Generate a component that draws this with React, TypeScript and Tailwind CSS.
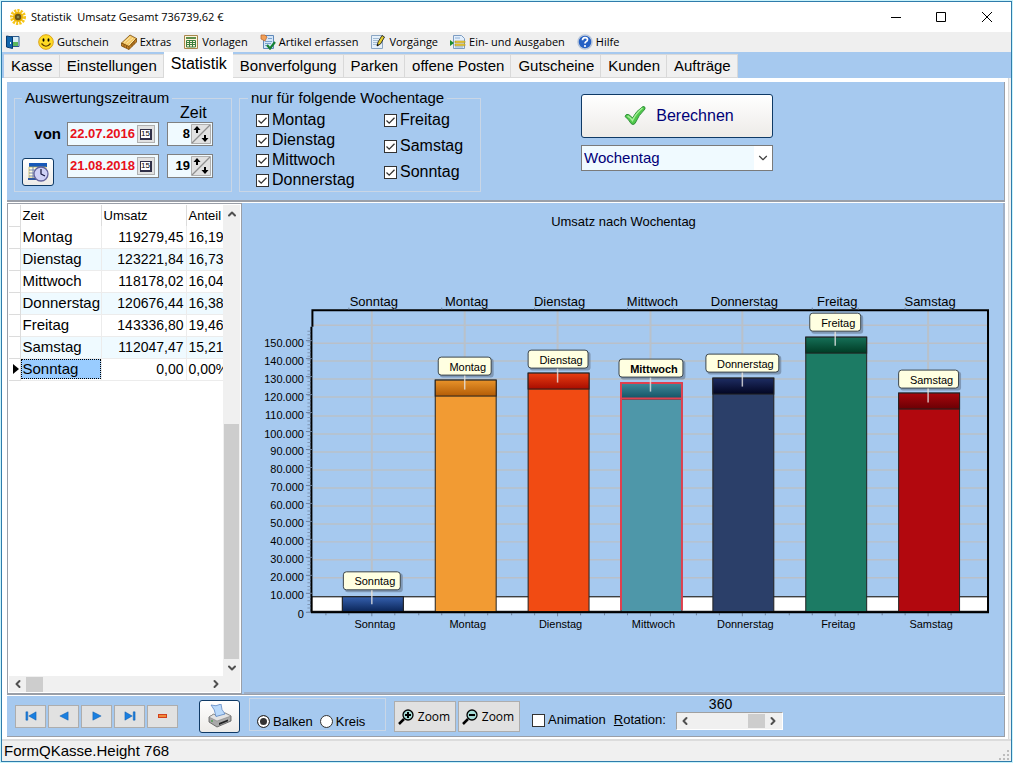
import { ReactNode, useState } from 'react'
import { ChevronDown, ChevronLeft, ChevronRight, ChevronUp } from 'lucide-react'

const menuItems = [
  { label: 'Gutschein', icon: <SmileyIcon /> },
  { label: 'Extras', icon: <ExtrasIcon /> },
  { label: 'Vorlagen', icon: <TemplateIcon /> },
  { label: 'Artikel erfassen', icon: <ArticleIcon /> },
  { label: 'Vorgänge', icon: <NotesIcon /> },
  { label: 'Ein- und Ausgaben', icon: <InOutIcon /> },
  { label: 'Hilfe', icon: <HelpIcon /> },
]

const tabs = [
  'Kasse',
  'Einstellungen',
  'Statistik',
  'Bonverfolgung',
  'Parken',
  'offene Posten',
  'Gutscheine',
  'Kunden',
  'Aufträge',
]

const rows = [
  { day: 'Montag', amount: '119279,45', share: '16,19%' },
  { day: 'Dienstag', amount: '123221,84', share: '16,73%' },
  { day: 'Mittwoch', amount: '118178,02', share: '16,04%' },
  { day: 'Donnerstag', amount: '120676,44', share: '16,38%' },
  { day: 'Freitag', amount: '143336,80', share: '19,46%' },
  { day: 'Samstag', amount: '112047,47', share: '15,21%' },
  { day: 'Sonntag', amount: '0,00', share: '0,00%' },
]

export default function App() {
  const [tab, setTab] = useState('Statistik')
  const [grouping, setGrouping] = useState('Wochentag')
  const [chartType, setChartType] = useState('Balken')

  return (
    <div className="flex min-h-screen flex-col bg-[#c9f3fb] p-px font-['Liberation_Sans',Arial,sans-serif] text-black">
      <div className="flex flex-1 flex-col border border-[#2f7cab] bg-[#f0f0f0]">
        <TitleBar />

        <nav className="flex h-5 items-center bg-[#efefef] pl-1 font-['Open_Sans',sans-serif] text-[11px] leading-5">
          <button type="button" aria-label="Beenden" className="mr-[18px]">
            <DoorIcon />
          </button>
          {menuItems.map((item) => (
            <button key={item.label} type="button" className="mr-3 flex items-center gap-[3px] whitespace-nowrap">
              {item.icon}
              {item.label}
            </button>
          ))}
        </nav>

        <div role="tablist" className="flex h-[26px] items-end bg-[#a6c9ef] pl-0.5 text-[15px]">
          {tabs.map((name) => (
            <button
              key={name}
              type="button"
              role="tab"
              aria-selected={tab === name}
              onClick={() => setTab(name)}
              className={
                tab === name
                  ? 'h-[26px] whitespace-nowrap bg-white pb-0.5 pl-[7px] pr-1.5 text-[16px] leading-5'
                  : 'h-6 whitespace-nowrap border border-l-0 border-[#d9d9d9] bg-[#f0f0f0] pl-[7px] pr-1.5 leading-5'
              }
            >
              {name}
            </button>
          ))}
        </div>

        <main className="mr-0.5 flex flex-1 flex-col border-r border-[#d9d9d9] bg-white pb-0.5 pl-[5px] pr-[3px] pt-1">
          <FilterBar grouping={grouping} setGrouping={setGrouping} />

          <div className="mt-px flex flex-1 border-b border-[#9a9fa8] bg-[#a6c9ef]">
            <DataGrid />
            <div className="ml-0.5 min-w-0 flex-1 border-b-2 border-r-2 border-[#a0b0c6]">
              <SalesChart />
            </div>
          </div>

          <BottomBar chartType={chartType} setChartType={setChartType} />
        </main>

        <footer className="flex h-[22px] items-center justify-between border-t-2 border-[#dcdcdc] bg-[#f0f0f0] pl-0.5 text-[15px] leading-5">
          FormQKasse.Height 768
          <svg className="h-3 w-3 self-end" viewBox="0 0 12 12" fill="#bdbdbd">
            <path d="M8 1h2v2H8zM8 5h2v2H8zM8 9h2v2H8zM4 5h2v2H4zM4 9h2v2H4zM0 9h2v2H0z" />
          </svg>
        </footer>
      </div>
    </div>
  )
}

function TitleBar() {
  return (
    <header className="flex h-[30px] items-center bg-white pl-2 pr-px">
      <svg className="h-4 w-4" viewBox="0 0 16 16">
        <circle cx="8" cy="8" r="6" fill="none" stroke="#f5c518" strokeWidth="4" strokeDasharray="2 1" />
        <circle cx="8" cy="8" r="5" fill="#eab308" />
        <circle cx="8" cy="8" r="3.2" fill="#6b5518" />
        <circle cx="8" cy="8" r="1.3" fill="#8c8a4a" />
      </svg>
      <h1 className="ml-[5px] flex-1 whitespace-pre font-['Open_Sans',sans-serif] text-[11px]">
        {'Statistik  Umsatz Gesamt 736739,62 €'}
      </h1>
      <button type="button" aria-label="Minimieren" className="flex h-full w-[45px] items-center justify-center">
        <svg className="h-3 w-3" viewBox="0 0 12 12" stroke="#000">
          <path d="M1 6.5h10" />
        </svg>
      </button>
      <button type="button" aria-label="Maximieren" className="flex h-full w-[45px] items-center justify-center">
        <svg className="h-3 w-3" viewBox="0 0 12 12" stroke="#000" fill="none">
          <path d="M1.5 1.5h9v9h-9z" />
        </svg>
      </button>
      <button type="button" aria-label="Schließen" className="flex h-full w-[47px] items-center justify-center">
        <svg className="h-3 w-3" viewBox="0 0 12 12" stroke="#000" fill="none">
          <path d="M1 1l10 10M11 1L1 11" />
        </svg>
      </button>
    </header>
  )
}

function FilterBar({ grouping, setGrouping }: { grouping: string; setGrouping: (v: string) => void }) {
  return (
    <section className="flex border-b-2 border-r border-b-[#9a9fa8] border-r-[#9a9fa8] bg-[#a6c9ef] pb-2 pl-[7px] pt-2">
      <fieldset className="w-[218px] border border-[#c9d6e6] pb-[5px] pl-[7px]">
        <legend className="px-[3px] text-[15px] leading-4">Auswertungszeitraum</legend>
        <div className="pl-[158px] text-[16px] leading-[14px]">Zeit</div>
        <div className="mt-0.5 flex items-center">
          <label htmlFor="from" className="w-[45px] pr-1.5 text-right text-[15px] font-bold">
            von
          </label>
          <DateField id="from" label="Datum von" value="22.07.2016" />
          <SpinField label="Stunde von" value="8" />
        </div>
        <div className="mt-2 flex items-start">
          <div className="w-[45px] pt-1">
            <button
              type="button"
              aria-label="Zeitraum wählen"
              className="flex h-7 w-8 items-center justify-center rounded-[3px] border border-[#0f3a66] bg-linear-to-b from-white to-[#edebe8]"
            >
              <CalendarClockIcon />
            </button>
          </div>
          <DateField id="to" label="Datum bis" value="21.08.2018" />
          <SpinField label="Stunde bis" value="19" />
        </div>
      </fieldset>

      <fieldset className="ml-[7px] flex w-[242px] border border-[#c9d6e6] pl-4 text-[16px]">
        <legend className="-ml-2 px-[3px] text-[15px] leading-4">nur für folgende Wochentage</legend>
        <div className="flex">
          <div className="w-32 pt-1">
            {['Montag', 'Dienstag', 'Mittwoch', 'Donnerstag'].map((day) => (
              <Check key={day} label={day} className="h-5" defaultChecked />
            ))}
          </div>
          <div className="pt-px">
            {['Freitag', 'Samstag', 'Sonntag'].map((day) => (
              <Check key={day} label={day} className="h-[26px]" defaultChecked />
            ))}
          </div>
        </div>
      </fieldset>

      <div className="ml-[100px] flex w-48 flex-col gap-[7px] pt-1 text-[#000078]">
        <button
          type="button"
          className="flex h-11 items-center justify-center gap-2.5 rounded-[3px] border border-[#0f3a66] bg-linear-to-b from-white to-[#edebe8] pl-1 text-[16px]"
        >
          <svg className="h-[22px] w-[22px]" viewBox="0 0 22 22">
            <path
              d="M1 11.500Q2 8.500 4.500 9.500Q7 11 8.500 13Q12 6 19 1.500Q21.500 1.200 21 4Q14.500 10 11 18.500Q9 20.500 7 18.500Q4.500 14 1 11.500z"
              fill="#4fc94a"
              stroke="#2f8f3a"
            />
            <path d="M3.500 11Q6 12 8.500 15.500Q12 8 18.500 3" fill="none" stroke="#a5ee98" strokeWidth="1.500" />
          </svg>
          Berechnen
        </button>
        <div className="relative">
          <select
            aria-label="Gruppierung"
            value={grouping}
            onChange={(e) => setGrouping(e.target.value)}
            className="block h-[26px] w-full appearance-none rounded-none border border-[#7a7a7a] bg-[#f0faff] pl-0.5 text-[15px] leading-5 outline-none"
          >
            <option>Wochentag</option>
            <option>Monat</option>
            <option>Stunde</option>
          </select>
          <span className="pointer-events-none absolute inset-y-px right-px flex w-[18px] items-center justify-center bg-white">
            <ChevronDown className="h-3.5 w-3.5 text-[#404040]" />
          </span>
        </div>
      </div>
    </section>
  )
}

function DateField({ id, label, value }: { id: string; label: string; value: string }) {
  return (
    <div className="flex h-6 w-[92px] items-center border border-[#808080] bg-[#f0faff] pr-[3px]">
      <input
        id={id}
        aria-label={label}
        defaultValue={value}
        className="w-full min-w-0 bg-transparent pl-0.5 text-[13px] font-bold text-[#e8101a] outline-none"
      />
      <button
        type="button"
        aria-label="Kalender öffnen"
        className="flex h-[18px] w-[18px] shrink-0 items-center justify-center border border-[#b0b0b0] bg-[#e1e1e1]"
      >
        <span className="border border-b-2 border-r-2 border-[#303048] bg-white text-[8px] leading-[8px]">15</span>
      </button>
    </div>
  )
}

function SpinField({ label, value }: { label: string; value: string }) {
  return (
    <div className="ml-2 flex h-6 w-[46px] items-center border border-[#808080] bg-[#f0faff] pr-px">
      <input
        aria-label={label}
        defaultValue={value}
        className="w-full min-w-0 bg-transparent pr-px text-right text-[13px] font-bold outline-none"
      />
      <button type="button" aria-label={`${label} ändern`} className="shrink-0 bg-[#e1e1e1]">
        <svg className="h-5 w-5" viewBox="0 0 20 20">
          <path d="M.5.5h19v19H.5z" fill="#e1e1e1" stroke="#b0b0b0" />
          <path d="M1 19L19 1" stroke="#909090" strokeWidth="1.300" />
          <path d="M6 2l3.500 4H7v3H5V6H2.500zM14 18l-3.500-4H13v-3h2v3h2.500z" fill="#000" />
        </svg>
      </button>
    </div>
  )
}

function Check({ label, className, defaultChecked }: { label: string; className: string; defaultChecked?: boolean }) {
  return (
    <label className={`flex items-center gap-[3px] whitespace-nowrap ${className}`}>
      <span className="relative h-[13px] w-[13px]">
        <input
          type="checkbox"
          defaultChecked={defaultChecked}
          className="peer block h-[13px] w-[13px] appearance-none border border-[#333] bg-white"
        />
        <svg
          className="pointer-events-none absolute inset-0 hidden peer-checked:block"
          viewBox="0 0 13 13"
          fill="none"
          stroke="#333"
          strokeWidth="1.300"
        >
          <path d="M2.500 6.500l2.700 2.700L10.500 3.800" />
        </svg>
      </span>
      {label}
    </label>
  )
}

function DataGrid() {
  return (
    <div className="flex w-[235px] shrink-0 flex-col border border-[#9a9fa8] bg-white p-px">
      <div className="flex flex-1">
        <div className="w-[215px] overflow-hidden">
          <table className="w-[230px] table-fixed border-collapse">
            <thead>
              <tr className="h-[21px] text-left text-[13px] leading-5">
                <th className="w-[11px] border-b border-r border-[#dcdcdc]" />
                <th className="w-[81px] border-r border-[#dcdcdc] pl-0.5 font-normal">Zeit</th>
                <th className="w-[85px] border-r border-[#dcdcdc] pl-0.5 font-normal">Umsatz</th>
                <th className="pl-0.5 font-normal">Anteil</th>
              </tr>
            </thead>
            <tbody>
              {rows.map((row, i) => {
                const current = row.day === 'Sonntag'
                return (
                  <tr key={row.day} className={`h-[22px] leading-5 ${i % 2 ? 'bg-[#effaff]' : 'bg-white'}`}>
                    <td className="border-b border-r border-[#dcdcdc] bg-white p-0">
                      {current && (
                        <svg className="ml-[3px] h-3 w-2" viewBox="0 0 8 12">
                          <path d="M1 1l6 5-6 5z" />
                        </svg>
                      )}
                    </td>
                    <td className="border-b border-r border-[#ececec] p-0 text-[15px]">
                      <div className={current ? 'border border-dotted border-black bg-[#99ccff] pl-px leading-[18px]' : 'pl-0.5'}>
                        {row.day}
                      </div>
                    </td>
                    <td className="border-b border-r border-[#ececec] p-0 pr-0.5 text-right text-[14px]">{row.amount}</td>
                    <td className="whitespace-nowrap border-b border-[#ececec] p-0 pl-0.5 text-[14px]">{row.share}</td>
                  </tr>
                )
              })}
            </tbody>
          </table>
        </div>
        <div className="flex flex-1 flex-col items-center bg-[#f0f0f0]">
          <ScrollButton label="Nach oben">
            <ChevronUp className="h-3 w-3" strokeWidth={4} />
          </ScrollButton>
          <div className="flex-1" />
          <div className="h-[235px] w-[15px] bg-[#cdcdcd]" />
          <ScrollButton label="Nach unten">
            <ChevronDown className="h-3 w-3" strokeWidth={4} />
          </ScrollButton>
        </div>
      </div>
      <div className="flex h-4 items-center bg-[#f0f0f0] pr-4">
        <ScrollButton label="Nach links">
          <ChevronLeft className="h-3 w-3" strokeWidth={4} />
        </ScrollButton>
        <div className="h-[15px] w-[17px] bg-[#cdcdcd]" />
        <div className="flex-1" />
        <ScrollButton label="Nach rechts">
          <ChevronRight className="h-3 w-3" strokeWidth={4} />
        </ScrollButton>
      </div>
    </div>
  )
}

function ScrollButton({ label, children }: { label: string; children: ReactNode }) {
  return (
    <button type="button" aria-label={label} className="flex h-[17px] w-[17px] items-center justify-center text-[#505050]">
      {children}
    </button>
  )
}

// Bars in chart units; top is the upper edge, mark is the x and y of the callout box and its width
const bars = [
  { day: 'Sonntag', x: 342, top: 597, mark: [343, 572, 58], fill: '#17397a', from: '#3560ae', to: '#0a2557' },
  { day: 'Montag', x: 435, top: 380, mark: [438, 357, 54], fill: '#f29b33', from: '#e8932a', to: '#b35c06' },
  { day: 'Dienstag', x: 528, top: 373, mark: [528, 350, 61], fill: '#f14b13', from: '#e83e12', to: '#a80c00' },
  { day: 'Mittwoch', x: 621, top: 383, mark: [619, 359, 65], fill: '#4e97a9', from: '#40899b', to: '#125263' },
  { day: 'Donnerstag', x: 713, top: 378, mark: [706, 354, 74], fill: '#2b3f69', from: '#1e2d63', to: '#020521' },
  { day: 'Freitag', x: 806, top: 337, mark: [810, 313, 52], fill: '#1c7b64', from: '#167058', to: '#003b24' },
  { day: 'Samstag', x: 899, top: 393, mark: [899, 370, 61], fill: '#b2080e', from: '#a8060c', to: '#6b0004' },
]

const steps = Array.from({ length: 16 }, (_, i) => i)

function SalesChart() {
  return (
    <svg
      className="block h-full w-full"
      viewBox="244 204 760 488"
      fontFamily="'Liberation Sans', Arial, sans-serif"
      role="img"
      aria-label="Umsatz nach Wochentag"
    >
      <defs>
        {bars.map((bar) => (
          <linearGradient key={bar.day} id={`cap-${bar.day}`} x1="0" y1="0" x2="0" y2="1">
            <stop offset="0" stopColor={bar.from} />
            <stop offset="1" stopColor={bar.to} />
          </linearGradient>
        ))}
      </defs>

      <text x="624" y="226" fontSize="13" textAnchor="middle">
        Umsatz nach Wochentag
      </text>

      {steps.map((i) => (
        <path key={i} d={`M313 ${Math.round(325 + i * 18.1) + 0.5}H988`} stroke="#b9c0c9" strokeWidth="1.500" />
      ))}
      {bars.map((bar) => (
        <path key={bar.day} d={`M${bar.x + 30} 311V612`} stroke="#b9c1ca" strokeWidth="2" />
      ))}

      <path d="M312 597.500H989V612H312z" fill="#fff" stroke="#000" />
      <path d="M312.500 327V310.500H989V613" fill="none" stroke="#000" strokeWidth="2" />
      <path d="M311.500 327V613" stroke="#000" strokeWidth="2" />
      <path d="M309 331V612" stroke="#7f95b3" strokeWidth="3" strokeDasharray="1 2.600" />

      {steps.map((i) => (
        <g key={i}>
          <path d={`M306 ${Math.round(342 + i * 18.1) - 1}h6`} stroke="#6d819e" />
          <text x="304" y={Math.round(347 + i * 18.1)} fontSize="11" textAnchor="end">
            {i === 15 ? '0' : `${150 - i * 10}.000`}
          </text>
        </g>
      ))}

      {bars.map((bar) => {
        const [mx, my, mw] = bar.mark
        const selected = bar.day === 'Mittwoch'
        const capHeight = bar.day === 'Sonntag' ? 15 : 16
        const center = bar.x + 31
        return (
          <g key={bar.day}>
            <rect x={bar.x + 0.5} y={bar.top + 0.5} width="61" height={612 - bar.top} fill={bar.fill} stroke="#222" />
            <rect x={bar.x + 0.5} y={bar.top + 0.5} width="61" height={capHeight} fill={`url(#cap-${bar.day})`} stroke="#222" />
            {selected && (
              <path
                d={`M${bar.x + 0.5} 611V${bar.top + 0.5}h61V611M${bar.x} ${bar.top + 16}h61`}
                fill="none"
                stroke="#e0404f"
                strokeWidth="2"
              />
            )}
            <rect x={mx + 2} y={my + 2} width={mw} height="19" rx="3" fill="#66788f" opacity="0.600" />
            <rect x={mx + 0.5} y={my + 0.5} width={mw - 1} height="18" rx="3" fill="#ffffe1" stroke="#3a444a" />
            <path d={`M${center - 1} ${my + 19}V${my + 33}`} stroke="#e6e6e6" strokeWidth="1.500" opacity="0.800" />
            <text
              x={mx + mw / 2 + 3}
              y={my + 14}
              fontSize="11"
              fontWeight={selected ? 'bold' : 'normal'}
              textAnchor="middle"
            >
              {bar.day}
            </text>
            <text x={center + 1} y="306" fontSize="13" textAnchor="middle">
              {bar.day}
            </text>
            <text x={center + 2} y="629" fontSize="11" textAnchor="middle">
              {bar.day}
            </text>
            <path
              d={`M${center - 1} 613v4M${center - 24} 614v2M${center + 22} 614v2M${center - 47} 614v2M${center - 24} 308v2M${center + 22} 308v2`}
              stroke="#6d819e"
            />
          </g>
        )
      })}
      <path d="M311 613H990" stroke="#000" strokeWidth="2" />
    </svg>
  )
}

function BottomBar({ chartType, setChartType }: { chartType: string; setChartType: (v: string) => void }) {
  const navButtons = [
    { label: 'Erster', d: 'M1 2h2v9H1zM12 2v9L4 6.500z' },
    { label: 'Zurück', d: 'M11 2v9L2 6.500z' },
    { label: 'Weiter', d: 'M2 2v9l9-4.500z' },
    { label: 'Letzter', d: 'M10 2h2v9h-2zM1 2v9l8-4.500z' },
  ]

  return (
    <section className="mt-px flex h-[41px] border-b border-r border-[#9a9fa8] bg-[#a6c9ef] pl-2 text-[13px]">
      <div className="flex items-center gap-0.5">
        {navButtons.map((btn) => (
          <button
            key={btn.label}
            type="button"
            aria-label={btn.label}
            className="flex h-[23px] w-[31px] items-center justify-center border border-[#adadad] bg-[#e1e1e1]"
          >
            <svg className="h-3 w-3" viewBox="0 0 13 13">
              <path d={btn.d} fill="#1a7fe0" stroke="#0b57a8" strokeWidth="0.500" />
            </svg>
          </button>
        ))}
        <button
          type="button"
          aria-label="Löschen"
          className="flex h-[23px] w-[31px] items-center justify-center border border-[#adadad] bg-[#e1e1e1]"
        >
          <span className="h-1 w-[9px] border border-[#d2401c] bg-[#f08a3c]" />
        </button>
      </div>

      <button
        type="button"
        aria-label="Drucken"
        className="ml-[21px] flex h-[33px] w-[41px] items-center justify-center self-center rounded-[3px] border border-[#0f3a66] bg-linear-to-b from-white to-[#edebe8]"
      >
        <PrinterIcon />
      </button>

      <div className="ml-[9px] mt-0.5 flex h-[33px] w-[137px] items-end gap-[7px] border border-[#c9d6e6] pl-[7px] leading-[17px]">
        {['Balken', 'Kreis'].map((type) => (
          <label key={type} className="flex items-center gap-[3px]">
            <input
              type="radio"
              name="chart-type"
              checked={chartType === type}
              onChange={() => setChartType(type)}
              className="h-[13px] w-[13px] appearance-none rounded-full border border-[#333] bg-white checked:bg-[#333] checked:shadow-[inset_0_0_0_2px_#fff]"
            />
            {type}
          </label>
        ))}
      </div>

      <div className="ml-2 mt-[5px] flex gap-0.5 font-['Open_Sans',sans-serif] text-[12px]">
        <ZoomButton plus />
        <ZoomButton />
      </div>

      <div className="ml-3 flex items-center pt-2">
        <Check label="Animation" className="h-5" />
      </div>
      <label htmlFor="rotation" className="ml-2 flex items-center pt-2">
        <span>
          <u>R</u>otation:
        </span>
      </label>
      <div className="ml-2.5 w-[107px] pt-px">
        <output htmlFor="rotation" className="block pl-[33px] text-[14px] leading-[15px]">
          360
        </output>
        <div id="rotation" className="flex h-[18px] items-center border border-b-white border-l-[#a0a0a0] border-r-white border-t-[#a0a0a0] bg-[#f0f0f0]">
          <ScrollButton label="Rotation verringern">
            <ChevronLeft className="h-3 w-3" strokeWidth={4} />
          </ScrollButton>
          <div className="flex-1" />
          <div className="h-3.5 w-[17px] bg-[#cdcdcd]" />
          <ScrollButton label="Rotation erhöhen">
            <ChevronRight className="h-3 w-3" strokeWidth={4} />
          </ScrollButton>
        </div>
      </div>
    </section>
  )
}

function ZoomButton({ plus }: { plus?: boolean }) {
  return (
    <button
      type="button"
      className="flex h-[31px] w-[62px] items-center justify-center gap-1 border border-[#adadad] bg-[#e1e1e1] pr-0.5"
    >
      <svg className="h-4 w-4" viewBox="0 0 16 16" fill="none" stroke="#000">
        <path d="M1 15l5-5" strokeWidth="2.500" />
        <circle cx="10" cy="6" r="5" fill="#a5dcd8" strokeWidth="1.300" />
        <path d={plus ? 'M7 6h6M10 3v6' : 'M7 6h6'} strokeWidth="2" />
      </svg>
      Zoom
    </button>
  )
}

function DoorIcon() {
  return (
    <svg className="h-3.5 w-3.5" viewBox="0 0 14 14">
      <path d="M5 1.500h8v10H5z" fill="#d8edf7" stroke="#2b5a8c" />
      <path d="M6 7h6v4H6z" fill="#5cb85c" />
      <path d="M.5 1l6 1v11.500l-6-1.500z" fill="#1267ad" stroke="#083c70" />
      <path d="M4.500 7v2" stroke="#fff" />
    </svg>
  )
}

function SmileyIcon() {
  return (
    <svg className="h-4 w-4" viewBox="0 0 16 16">
      <circle cx="8" cy="8" r="7.300" fill="#ffdb24" stroke="#dba31a" />
      <ellipse cx="5.500" cy="6" rx="1" ry="1.800" />
      <ellipse cx="10.500" cy="6" rx="1" ry="1.800" />
      <path d="M3.500 9.500q4.500 5.500 9 0" fill="none" stroke="#5a3a00" strokeWidth="1.200" />
    </svg>
  )
}

function ExtrasIcon() {
  return (
    <svg className="h-4 w-4" viewBox="0 0 16 16" stroke="#7a4c0c" strokeWidth="0.800">
      <path d="M.5 9L9 1l6.500 3.500L8 13z" fill="#f3c768" />
      <path d="M.5 9L8 12.500 15.500 4.500V8L8 15.500.5 12z" fill="#c98426" />
      <path d="M3 8.500L9.500 3M5.500 9.500L12 4M8 11l5.500-5.500" fill="none" stroke="#fff0b8" />
      <path d="M3 10.500v2.500M5.500 12v2M8 12.500v3M11 9.500v3M13 7.500v3" fill="none" />
    </svg>
  )
}

function TemplateIcon() {
  return (
    <svg className="h-4 w-4" viewBox="0 0 16 16" fill="none">
      <path d="M1.500 1.500h13v13h-13z" fill="#fff4dc" stroke="#a8874a" />
      <path d="M3 3h10v2H3z" fill="#5e8f4c" />
      <path d="M3.500 6.500h9v6.500h-9zM3.500 8.500h9M3.500 10.500h9M6.500 6.500V13M9.500 6.500V13" stroke="#3b7f3d" />
    </svg>
  )
}

function ArticleIcon() {
  return (
    <svg className="h-4 w-4" viewBox="0 0 16 16" fill="none">
      <path d="M3.500 1.500h10v13h-10z" fill="#d4e6f9" stroke="#5f88b8" />
      <path d="M8 4.500h4M5 7.500h7M5 9.500h6M5 11.500h3" stroke="#7aa3cf" />
      <path d="M1 1h4l2 2-2 4-4-2z" fill="#f2a057" stroke="#b4602a" strokeWidth="0.700" />
      <path d="M7 11l3 3.500L15 8" stroke="#168033" strokeWidth="2.200" />
    </svg>
  )
}

function NotesIcon() {
  return (
    <svg className="h-4 w-4" viewBox="0 0 16 16" fill="none">
      <path d="M1.500 1.500h11v13h-11z" fill="#e5f0fa" stroke="#8aa6c4" />
      <path d="M3 4.500h6M3 6.500h5M3 8.500h4M3 10.500h4" stroke="#a3bcd4" />
      <path d="M7 12l1-4 4-6.500 2.500 1.500-4 7z" fill="#e6cf2d" stroke="#222" strokeWidth="0.900" />
      <path d="M7 12l.5-2 1.500 1z" fill="#000" />
    </svg>
  )
}

function InOutIcon() {
  return (
    <svg className="h-4 w-4" viewBox="0 0 16 16" fill="none">
      <path d="M3.500 1.500h8l3 3v10h-11z" fill="#e2eefb" stroke="#7c9cc2" />
      <path d="M5 4h5M5 13h8" stroke="#8fb0d6" />
      <path d="M5 7h10v1.800H5zM5 10h10v1.800H5z" fill="#f4d23a" stroke="#9c7f10" strokeWidth="0.500" />
      <path d="M0 6l4 3-4 3z" fill="#1c8c2c" />
    </svg>
  )
}

function HelpIcon() {
  return (
    <svg className="h-4 w-4" viewBox="0 0 16 16" fill="none">
      <circle cx="8" cy="8" r="7" fill="#2560c4" stroke="#b8c6da" strokeWidth="1.500" />
      <path d="M5.500 6.200q0-2.500 2.500-2.500t2.500 2q0 1.300-1.500 2-1 .5-1 1.800" stroke="#fff" strokeWidth="1.700" />
      <circle cx="8" cy="12" r="1.100" fill="#fff" />
    </svg>
  )
}

function CalendarClockIcon() {
  return (
    <svg className="h-5 w-[22px] shrink-0" viewBox="0 0 22 20">
      <path d="M2 1h18v4H2z" fill="#1858b8" />
      <path d="M2 5h17v11H2z" fill="#fffce0" stroke="#c2b24a" strokeWidth="0.700" />
      <path d="M2 8h8M2 11h6M2 14h6M6 5v11" stroke="#5b6ea8" strokeWidth="0.800" />
      <path d="M1 16h9v2H1z" fill="#3158a0" />
      <circle cx="14" cy="12" r="7" fill="#cfd1f7" stroke="#62629c" strokeWidth="1.300" />
      <path d="M14 7v5l4 2" fill="none" stroke="#101038" strokeWidth="1.200" />
    </svg>
  )
}

function PrinterIcon() {
  return (
    <svg className="h-6 w-6" viewBox="0 0 24 24">
      <path d="M1 13l5-3 2 2 9-3 6 3v5l-14 6-8-5z" fill="#a9a9a9" stroke="#555" strokeWidth="0.800" />
      <path d="M1 13l8 4 14-5-6-3-9 3-2-2z" fill="#e3e3e3" stroke="#777" strokeWidth="0.500" />
      <path d="M3 1q5 2 10-1 0 6 4 10l-9 2.500q-1-7.500-5-11.500z" fill="#b9d9fb" stroke="#5a86c4" strokeWidth="0.800" />
      <path d="M11 19l9-3.500v1.800L11 21z" fill="#222" />
      <circle cx="4" cy="17" r="0.900" fill="#4a9a4a" />
    </svg>
  )
}
